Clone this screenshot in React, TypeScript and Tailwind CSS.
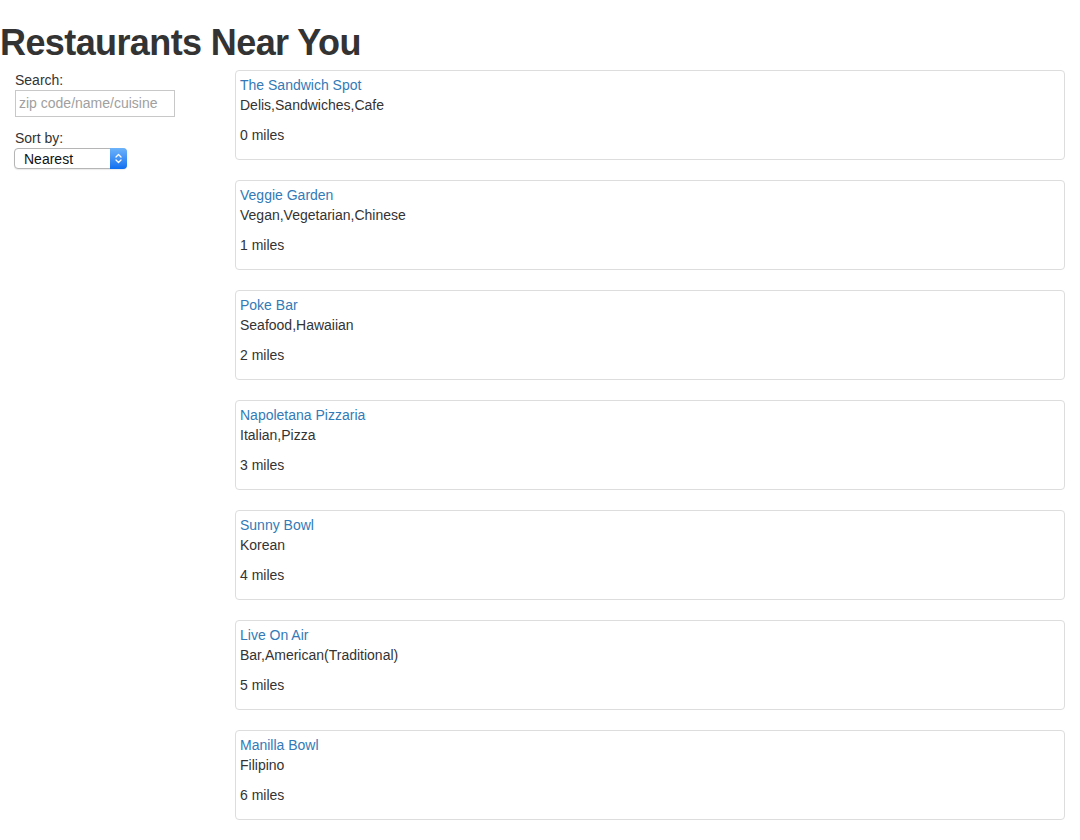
const restaurants = [
  { name: "The Sandwich Spot", tags: "Delis,Sandwiches,Cafe", miles: 0 },
  { name: "Veggie Garden", tags: "Vegan,Vegetarian,Chinese", miles: 1 },
  { name: "Poke Bar", tags: "Seafood,Hawaiian", miles: 2 },
  { name: "Napoletana Pizzaria", tags: "Italian,Pizza", miles: 3 },
  { name: "Sunny Bowl", tags: "Korean", miles: 4 },
  { name: "Live On Air", tags: "Bar,American(Traditional)", miles: 5 },
  { name: "Manilla Bowl", tags: "Filipino", miles: 6 },
];

function SortSelect() {
  return (
    <div className="flex h-[21px] w-[113px] -ml-px items-stretch rounded-[4px] border border-[#b5b5b5] bg-white shadow-[0_1px_1px_rgba(0,0,0,0.08)]">
      <span className="flex flex-1 items-center pt-px pl-[9px] text-[14px] leading-none text-[#111]">Nearest</span>
      <span className="-my-px -mr-px flex w-[17px] items-center justify-center rounded-r-[4px] bg-gradient-to-b from-[#6cb3fa] to-[#0a6ff0]">
        <svg width="7" height="11" viewBox="0 0 7 11" fill="none" stroke="white" strokeWidth="1.3" strokeLinecap="round" strokeLinejoin="round">
          <path d="M1 4 L3.5 1.5 L6 4" />
          <path d="M1 7 L3.5 9.5 L6 7" />
        </svg>
      </span>
    </div>
  );
}

export default function App() {
  return (
    <div className="min-h-[840px] bg-white text-[14px] leading-[20px] text-[#333]" style={{ fontFamily: '"Liberation Sans", Arial, sans-serif' }}>
      <h1 className="mt-[23px] mb-[7px] text-[36px] font-bold leading-[1.1] tracking-[-0.6px] text-[#333]">Restaurants Near You</h1>
      <div className="flex">
        <div className="w-[235px] shrink-0 pl-[15px]">
          <div>Search:</div>
          <input
            className="block h-[27px] w-[160px] border border-[#c8c8c8] px-[3px] text-[14px] text-[#333] outline-none placeholder:text-[#a0a0a0]"
            placeholder="zip code/name/cuisine"
          />
          <div className="mt-[11px]">Sort by:</div>
          <SortSelect />
        </div>
        <div className="flex flex-1 flex-col gap-5 pr-[15px]">
          {restaurants.map((r) => (
            <div key={r.name} className="rounded-[4px] border border-[#ddd] px-[4px] py-[4px]">
              <a href="#" className="block text-[#337ab7]">{r.name}</a>
              <div>{r.tags}</div>
              <p className="my-[10px]">{r.miles} miles</p>
            </div>
          ))}
        </div>
      </div>
    </div>
  );
}
